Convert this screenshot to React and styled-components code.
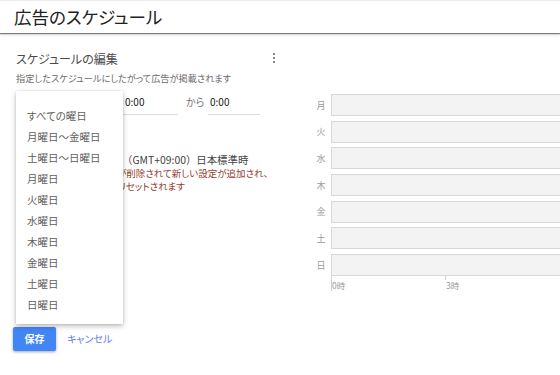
import React from "react";
import styled, { createGlobalStyle } from "styled-components";

const GlobalStyle = createGlobalStyle`
  html, body {
    margin: 0;
    padding: 0;
    background: #fff;
  }
  body {
    font-family: "Noto Sans CJK JP", "Noto Sans", sans-serif;
    font-feature-settings: "palt";
    overflow: hidden;
  }
`;

const menuItems = [
  "すべての曜日",
  "月曜日～金曜日",
  "土曜日～日曜日",
  "月曜日",
  "火曜日",
  "水曜日",
  "木曜日",
  "金曜日",
  "土曜日",
  "日曜日",
];

const days = ["月", "火", "水", "木", "金", "土", "日"];

const App = () => {
  return (
    <Page>
      <GlobalStyle />
      <Header>広告のスケジュール</Header>
      <Body>
        <Editor>
          <TitleRow>
            <Title>スケジュールの編集</Title>
            <Kebab>
              <span />
              <span />
              <span />
            </Kebab>
          </TitleRow>
          <Subtitle>指定したスケジュールにしたがって広告が掲載されます</Subtitle>

          <TimeRow>
            <DaySelect>すべての曜日</DaySelect>
            <TimeField>0:00</TimeField>
            <Between>から</Between>
            <TimeField $narrow>0:00</TimeField>
          </TimeRow>

          <Notes>
            <NoteLine>
              <Prefix $w={106}>タイムゾーン</Prefix>
              <Wide>（GMT+09:00）</Wide>日本標準時
            </NoteLine>
            <Warning>
              <Prefix $w={101}>保存すると既存</Prefix>が削除されて新しい設定が追加され、
            </Warning>
            <Warning>
              <Prefix $w={102}>掲載統計が</Prefix>リセットされます
            </Warning>
          </Notes>

          <Actions>
            <SaveButton>保存</SaveButton>
            <CancelLink>キャンセル</CancelLink>
          </Actions>

          <Menu>
            {menuItems.map((item) => (
              <MenuItem key={item}>{item}</MenuItem>
            ))}
          </Menu>
        </Editor>

        <Chart>
          {days.map((d) => (
            <DayRow key={d}>
              <DayLabel>{d}</DayLabel>
              <Bar />
            </DayRow>
          ))}
          <Axis>
            <Tick>0時</Tick>
            <Tick>3時</Tick>
          </Axis>
        </Chart>
      </Body>
    </Page>
  );
};

const Page = styled.div`
  width: 560px;
  height: 375px;
  position: relative;
  overflow: hidden;
  border-top: 1px solid #ececec;
  box-sizing: border-box;
`;

const Header = styled.div`
  height: 32px;
  line-height: 32px;
  padding-left: 14px;
  font-size: 17.5px;
  color: #212121;
  box-shadow: 0 1px 1px rgba(0, 0, 0, 0.45), 0 2px 3px rgba(0, 0, 0, 0.12);
  background: #fff;
`;

const Body = styled.div`
  display: flex;
  align-items: flex-start;
`;

const Editor = styled.div`
  position: relative;
  width: 260px;
  padding: 16px 0 0 16px;
  flex: none;
`;

const TitleRow = styled.div`
  display: flex;
  align-items: center;
  justify-content: space-between;
  height: 18px;
`;

const Title = styled.div`
  font-size: 12px;
  color: #4a4a4a;
`;

const Kebab = styled.div`
  display: flex;
  flex-direction: column;
  gap: 2px;
  margin-right: 1px;
  span {
    width: 2px;
    height: 2px;
    background: #616161;
    border-radius: 50%;
  }
`;

const Subtitle = styled.div`
  margin-top: 4px;
  font-size: 9.2px;
  color: #6d6a6e;
`;

const TimeRow = styled.div`
  display: flex;
  align-items: flex-end;
  margin-top: 6px;
  height: 24px;
`;

const DaySelect = styled.div`
  width: 104px;
  margin-right: 3px;
  font-size: 10px;
  color: #616161;
`;

const TimeField = styled.div`
  width: ${(p) => (p.$narrow ? "50px" : "53px")};
  padding-left: 2px;
  padding-bottom: 5px;
  border-bottom: 1px solid #dedede;
  font-size: 10px;
  color: #212121;
`;

const Between = styled.div`
  width: 22px;
  padding: 0 0 6px 8px;
  font-size: 10px;
  color: #757575;
`;

const Notes = styled.div`
  margin-top: 38px;
  line-height: 13.5px;
  color: #424242;
  white-space: nowrap;
`;

const Prefix = styled.span`
  display: inline-block;
  width: ${(p) => p.$w}px;
  overflow: hidden;
  vertical-align: bottom;
`;

const NoteLine = styled.div`
  font-size: 10.4px;
`;

const Wide = styled.span`
  font-feature-settings: normal;
`;

const Warning = styled.div`
  font-size: 9.5px;
  color: #93402f;
`;

const Actions = styled.div`
  display: flex;
  align-items: center;
  gap: 11px;
  margin-top: 133px;
  margin-left: -3px;
`;

const SaveButton = styled.button`
  width: 43px;
  height: 24px;
  border: none;
  border-radius: 2px;
  background: #4285f4;
  color: #fff;
  font-family: inherit;
  font-size: 10px;
  font-weight: 700;
  box-shadow: 0 1px 3px rgba(0, 0, 0, 0.35);
  padding: 0;
`;

const CancelLink = styled.span`
  font-size: 10px;
  color: #5e7ef0;
`;

const Menu = styled.ul`
  position: absolute;
  left: 16px;
  top: 58px;
  width: 107px;
  margin: 0;
  padding: 14px 0 9px;
  list-style: none;
  background: #fff;
  box-shadow: 0 2px 5px rgba(0, 0, 0, 0.28), 0 0 1px rgba(0, 0, 0, 0.15);
`;

const MenuItem = styled.li`
  height: 21px;
  line-height: 21px;
  padding-left: 11px;
  font-size: 10.5px;
  color: #5f5f5f;
`;

const Chart = styled.div`
  flex: 1;
  margin-top: 61px;
  margin-left: 39px;
  display: flex;
  flex-direction: column;
  gap: 4.7px;
`;

const DayRow = styled.div`
  display: flex;
  align-items: center;
`;

const DayLabel = styled.div`
  width: 16px;
  margin-left: -2px;
  margin-right: 2px;
  text-align: center;
  font-size: 9px;
  color: #9a9a9a;
`;

const Bar = styled.div`
  width: 600px;
  height: 20px;
  flex: none;
  background: #f3f3f3;
  border: 1px solid #d8d8d8;
`;

const Axis = styled.div`
  display: flex;
  margin-left: 16px;
  margin-top: -4.7px;
  border-left: 1px solid #cfcfcf;
`;

const Tick = styled.div`
  width: 114px;
  flex: none;
  padding-top: 3px;
  font-size: 8.5px;
  color: #9a9a9a;
  position: relative;
  &::before {
    content: "";
    position: absolute;
    left: -1px;
    top: 0;
    width: 1px;
    height: 4px;
    background: #cfcfcf;
  }
`;

export default App;
